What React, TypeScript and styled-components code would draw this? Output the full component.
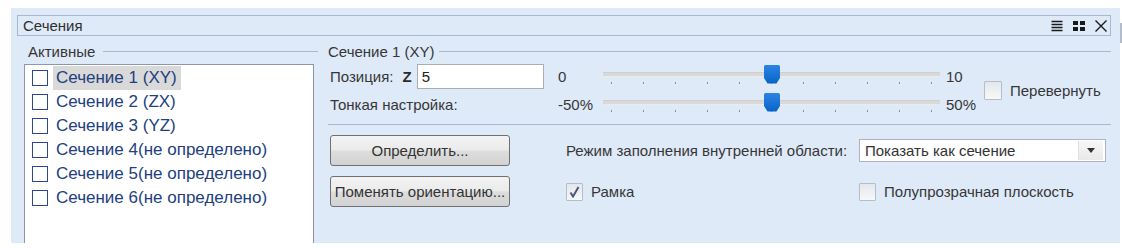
import React from "react";
import styled, { createGlobalStyle } from "styled-components";

const GlobalStyle = createGlobalStyle`
  html, body {
    margin: 0;
    padding: 0;
    background: #ffffff;
  }
  body {
    font-family: "Liberation Sans", Arial, sans-serif;
    color: #363636;
  }
`;

const Page = styled.div`
  display: flex;
  align-items: flex-start;
  box-sizing: border-box;
  height: 248px;
  padding: 8px 0 0 11px;
  overflow: hidden;
`;

const Panel = styled.div`
  display: flex;
  flex-direction: column;
  box-sizing: border-box;
  width: 1109px;
  height: 235px;
  padding: 7px 9px 0 6px;
  background: #dfeaf9;
  overflow: hidden;
`;

const EdgeStrip = styled.div`
  width: 2px;
  height: 20px;
  margin-top: 15px;
  background: #b3bccb;
`;

const TitleBar = styled.div`
  display: flex;
  align-items: center;
  box-sizing: border-box;
  height: 21px;
  padding: 0 3px 0 5px;
  border: 1px solid #a9b7cf;
  font-size: 15px;
  color: #2f2f2f;
`;

const TitleIcons = styled.div`
  display: flex;
  align-items: center;
  gap: 10px;
  margin-left: auto;
`;

const Body = styled.div`
  display: flex;
  flex: 1;
  min-height: 0;
  margin-top: 6px;
`;

const LeftCol = styled.div`
  display: flex;
  flex-direction: column;
  width: 301px;
`;

const RightCol = styled.div`
  display: flex;
  flex-direction: column;
  flex: 1;
  margin-left: 10px;
`;

const Legend = styled.div<{ $indent: number; $gap: number }>`
  display: flex;
  align-items: center;
  height: 18px;
  padding-left: ${({ $indent }) => $indent}px;
  font-size: 15px;
  color: #363636;
  white-space: nowrap;

  &::after {
    content: "";
    flex: 1;
    height: 1px;
    margin-left: ${({ $gap }) => $gap}px;
    background: #a9b7cf;
  }
`;

const ListBox = styled.div`
  flex: 1;
  box-sizing: border-box;
  width: 290px;
  margin: 4px 0 0 7px;
  padding: 1px 0 0 7px;
  background: #ffffff;
  border: 1px solid #8d97a8;
  border-bottom: none;
`;

const ListRow = styled.div`
  display: flex;
  align-items: center;
  height: 24px;
`;

const ListCheck = styled.span`
  box-sizing: border-box;
  width: 16px;
  height: 16px;
  border: 1.5px solid #2c4b8c;
  background: #ffffff;
`;

const ListText = styled.span<{ $selected?: boolean }>`
  margin-left: 5px;
  padding: 0 4px 0 3px;
  height: 24px;
  line-height: 24px;
  font-size: 17px;
  color: #22407d;
  background: ${({ $selected }) => ($selected ? "#d9d9d9" : "transparent")};
`;

const TopGrid = styled.div`
  display: grid;
  grid-template-columns: 228px 45px 337px 44px 1fr;
  grid-template-rows: 25px 25px;
  row-gap: 3px;
  margin-top: 4px;
  padding-left: 2px;
  font-size: 15px;
`;

const Cell = styled.div<{ $pad?: number }>`
  display: flex;
  align-items: center;
  padding-left: ${({ $pad }) => $pad ?? 0}px;
  white-space: nowrap;
`;

const SideCell = styled(Cell)`
  grid-column: 5;
  grid-row: 1 / span 2;
`;

const AxisMark = styled.span`
  margin: 0 5px 0 9px;
  font-weight: bold;
  color: #2a2a2a;
`;

const TextInput = styled.div`
  display: flex;
  align-items: center;
  box-sizing: border-box;
  width: 127px;
  height: 25px;
  padding-left: 4px;
  background: #ffffff;
  border: 1px solid #abadb3;
  color: #222;
`;

const SliderBox = styled.div`
  position: relative;
  height: 25px;
`;

const Track = styled.div`
  position: absolute;
  left: 0;
  right: 0;
  top: 8px;
  height: 3px;
  background: #d9d9d9;
  border-top: 1px solid #cfcfcf;
  border-bottom: 1px solid #ebebeb;
`;

const Tick = styled.div`
  position: absolute;
  top: 18px;
  width: 1px;
  height: 2px;
  background: #8f8f8f;
`;

const Thumb = styled.svg`
  position: absolute;
  top: 1px;
  width: 16px;
  height: 19px;
  margin-left: -8px;
`;

const FlagBox = styled.span<{ $size: number }>`
  display: flex;
  align-items: center;
  justify-content: center;
  box-sizing: border-box;
  width: ${({ $size }) => $size}px;
  height: ${({ $size }) => $size + 1}px;
  border: 1px solid #b4bdca;
  border-radius: 1px;
  background: linear-gradient(#e4e7ec, #f7f8fa);
`;

const FlagLabel = styled.span`
  margin-left: 8px;
  font-size: 15px;
  color: #363636;
`;

const Separator = styled.div`
  height: 1px;
  margin-top: 7px;
  background: #a9b7cf;
`;

const BottomGrid = styled.div`
  display: grid;
  grid-template-columns: 236px 293px 247px;
  grid-template-rows: 31px 31px;
  row-gap: 10px;
  margin-top: 10px;
  padding-left: 2px;
  font-size: 15px;
`;

const Button = styled.div`
  display: flex;
  align-items: center;
  justify-content: center;
  box-sizing: border-box;
  width: 180px;
  height: 31px;
  border: 1px solid #707070;
  border-radius: 3px;
  background: linear-gradient(#f3f3f3 0%, #ebebeb 48%, #dddddd 52%, #d2d2d2 100%);
  color: #333;
  white-space: nowrap;
`;

const Select = styled.div`
  display: flex;
  align-items: center;
  box-sizing: border-box;
  width: 247px;
  height: 23px;
  padding-left: 5px;
  background: #ffffff;
  border: 1px solid #abb4c4;
  color: #333;
`;

const SelectArrow = styled.span`
  display: flex;
  align-items: center;
  justify-content: center;
  width: 24px;
  height: 19px;
  margin: 0 2px 0 auto;
  background: linear-gradient(#f7f7f7, #e9e9e9);
  border-left: 1px solid #e0e0e0;
`;

const MenuIcon = () => (
  <svg width="12" height="12" viewBox="0 0 12 12">
    {[1.5, 4.5, 7.5, 10.5].map((y) => (
      <rect key={y} x="0.5" y={y - 0.75} width="11" height="1.5" fill="#1a1a1a" />
    ))}
  </svg>
);

const TilesIcon = () => (
  <svg width="12" height="10" viewBox="0 0 12 10">
    <rect x="0" y="0" width="5" height="4" fill="#1a1a1a" />
    <rect x="7" y="0" width="5" height="4" fill="#1a1a1a" />
    <rect x="0" y="6" width="5" height="4" fill="#1a1a1a" />
    <rect x="7" y="6" width="5" height="4" fill="#1a1a1a" />
  </svg>
);

const CloseIcon = () => (
  <svg width="12" height="12" viewBox="0 0 12 12">
    <path d="M0.5 0.5 L11.5 11.5 M11.5 0.5 L0.5 11.5" stroke="#1a1a1a" strokeWidth="1.4" />
  </svg>
);

const Slider: React.FC<{ value: number }> = ({ value }) => (
  <SliderBox>
    <Track />
    {Array.from({ length: 11 }, (_, i) => (
      <Tick key={i} style={{ left: 8 + i * 32 }} />
    ))}
    <Thumb viewBox="0 0 16 19" style={{ left: `${value}%` }}>
      <defs>
        <linearGradient id="thumbFill" x1="0" y1="0" x2="0" y2="1">
          <stop offset="0" stopColor="#2b84e4" />
          <stop offset="1" stopColor="#0a64c8" />
        </linearGradient>
      </defs>
      <path d="M1.5 0 H14.5 Q16 0 16 1.5 V13 L12.5 18.5 H3.5 L0 13 V1.5 Q0 0 1.5 0 Z" fill="url(#thumbFill)" />
    </Thumb>
  </SliderBox>
);

const Flag: React.FC<{ label: string; checked?: boolean; size?: number }> = ({
  label,
  checked,
  size = 18,
}) => (
  <>
    <FlagBox $size={size}>
      {checked && (
        <svg width="11" height="12" viewBox="0 0 11 12">
          <path d="M1.5 6.5 L4 10.5 L9.5 1" stroke="#4a5a78" strokeWidth="2" fill="none" />
        </svg>
      )}
    </FlagBox>
    <FlagLabel>{label}</FlagLabel>
  </>
);

const sections = [
  "Сечение 1 (XY)",
  "Сечение 2 (ZX)",
  "Сечение 3 (YZ)",
  "Сечение 4(не определено)",
  "Сечение 5(не определено)",
  "Сечение 6(не определено)",
];

export default function App() {
  return (
    <>
      <GlobalStyle />
      <Page>
        <Panel>
          <TitleBar>
            Сечения
            <TitleIcons>
              <MenuIcon />
              <TilesIcon />
              <CloseIcon />
            </TitleIcons>
          </TitleBar>
          <Body>
            <LeftCol>
              <Legend $indent={11} $gap={8}>Активные</Legend>
              <ListBox>
                {sections.map((name, i) => (
                  <ListRow key={name}>
                    <ListCheck />
                    <ListText $selected={i === 0}>{name}</ListText>
                  </ListRow>
                ))}
              </ListBox>
            </LeftCol>
            <RightCol>
              <Legend $indent={0} $gap={4}>Сечение 1 (XY)</Legend>
              <TopGrid>
                <Cell>
                  Позиция:
                  <AxisMark>Z</AxisMark>
                  <TextInput>5</TextInput>
                </Cell>
                <Cell>0</Cell>
                <Slider value={50} />
                <Cell $pad={6}>10</Cell>
                <SideCell>
                  <Flag label="Перевернуть" size={18} />
                </SideCell>
                <Cell>Тонкая настройка:</Cell>
                <Cell>-50%</Cell>
                <Slider value={50} />
                <Cell $pad={6}>50%</Cell>
              </TopGrid>
              <Separator />
              <BottomGrid>
                <Cell>
                  <Button>Определить...</Button>
                </Cell>
                <Cell>Режим заполнения внутренней области:</Cell>
                <Cell>
                  <Select>
                    Показать как сечение
                    <SelectArrow>
                      <svg width="8" height="5" viewBox="0 0 8 5">
                        <path d="M0 0 H8 L4 5 Z" fill="#333" />
                      </svg>
                    </SelectArrow>
                  </Select>
                </Cell>
                <Cell>
                  <Button>Поменять ориентацию...</Button>
                </Cell>
                <Cell>
                  <Flag label="Рамка" checked size={17} />
                </Cell>
                <Cell>
                  <Flag label="Полупрозрачная плоскость" size={17} />
                </Cell>
              </BottomGrid>
            </RightCol>
          </Body>
        </Panel>
        <EdgeStrip />
      </Page>
    </>
  );
}
